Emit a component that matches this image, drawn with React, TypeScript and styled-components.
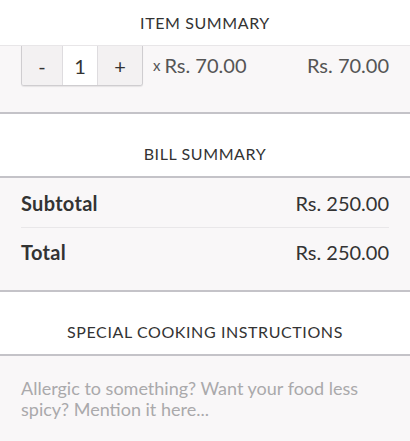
import React, { useState } from "react";
import styled, { createGlobalStyle } from "styled-components";

const GlobalStyle = createGlobalStyle`
  body {
    margin: 0;
    background: #fff;
    font-family: Lato, "Open Sans", sans-serif;
    color: #333;
  }
  * {
    box-sizing: border-box;
  }
`;

const Page = styled.div`
  width: 410px;
  height: 441px;
  overflow: hidden;
  display: flex;
  flex-direction: column;
`;

const SectionHeader = styled.div<{ $compact?: boolean }>`
  background: #fff;
  text-align: center;
  font-size: 16px;
  line-height: 20px;
  letter-spacing: 0.6px;
  color: #333;
  padding: ${(p) => (p.$compact ? "13px 0 12px" : "30px 0 12px")};
  border-bottom: ${(p) => (p.$compact ? "1px solid #e8e6e8" : "2px solid #c4c3c8")};
`;

const Section = styled.div<{ $borderBottom?: boolean }>`
  background: #f9f7f8;
  border-bottom: ${(p) => (p.$borderBottom ? "2px solid #c4c3c8" : "none")};
`;

const ItemRow = styled.div`
  display: flex;
  align-items: flex-start;
  padding: 0 21px 26px;
`;

const Stepper = styled.div`
  display: flex;
  height: 40px;
  border: 1px solid #cfcdd0;
  border-top: none;
  border-radius: 0 0 3px 3px;
  box-shadow: 0 1px 1px rgba(0, 0, 0, 0.08);
  overflow: hidden;
`;

const StepButton = styled.div<{ $w: number; $white?: boolean }>`
  width: ${(p) => p.$w}px;
  display: flex;
  align-items: center;
  justify-content: center;
  background: ${(p) => (p.$white ? "#fff" : "#f3f1f2")};
  font-size: 20px;
  color: #333;
  cursor: pointer;
  & + & {
    border-left: 1px solid #dedcdf;
  }
`;

const UnitPrice = styled.div`
  margin-left: 10px;
  height: 38px;
  display: flex;
  align-items: center;
  font-size: 20px;
  color: #555;
  gap: 4px;
  span {
    font-size: 15px;
  }
`;

const LinePrice = styled.div`
  margin-left: auto;
  height: 38px;
  display: flex;
  align-items: center;
  font-size: 20px;
  color: #555;
`;

const BillList = styled.div`
  padding: 0 21px 14px;
`;

const BillRow = styled.div`
  display: flex;
  justify-content: space-between;
  align-items: center;
  height: 49px;
  font-size: 20px;
  color: #333;
  & + & {
    border-top: 1px solid #e9e7e9;
  }
`;

const BillLabel = styled.div`
  font-weight: 700;
  letter-spacing: 0.3px;
`;

const Instructions = styled.textarea`
  display: block;
  width: 100%;
  height: 100px;
  border: none;
  outline: none;
  resize: none;
  background: transparent;
  padding: 22px 21px 0;
  font-family: Lato, "Open Sans", sans-serif;
  font-size: 18px;
  line-height: 21px;
  color: #333;
  &::placeholder {
    color: #aaa9ab;
  }
`;

export default function App() {
  const [qty, setQty] = useState(1);
  const unit = 70;
  return (
    <>
      <GlobalStyle />
      <Page>
        <SectionHeader $compact>ITEM SUMMARY</SectionHeader>
        <Section $borderBottom>
          <ItemRow>
            <Stepper>
              <StepButton $w={40} onClick={() => setQty(Math.max(1, qty - 1))}>
                -
              </StepButton>
              <StepButton $w={35} $white>
                {qty}
              </StepButton>
              <StepButton $w={45} onClick={() => setQty(qty + 1)}>
                +
              </StepButton>
            </Stepper>
            <UnitPrice>
              <span>x</span>Rs. {unit.toFixed(2)}
            </UnitPrice>
            <LinePrice>Rs. {(unit * qty).toFixed(2)}</LinePrice>
          </ItemRow>
        </Section>
        <SectionHeader>BILL SUMMARY</SectionHeader>
        <Section $borderBottom>
          <BillList>
            <BillRow>
              <BillLabel>Subtotal</BillLabel>
              <div>Rs. 250.00</div>
            </BillRow>
            <BillRow>
              <BillLabel>Total</BillLabel>
              <div>Rs. 250.00</div>
            </BillRow>
          </BillList>
        </Section>
        <SectionHeader>SPECIAL COOKING INSTRUCTIONS</SectionHeader>
        <Section>
          <Instructions placeholder="Allergic to something? Want your food less spicy? Mention it here..." />
        </Section>
      </Page>
    </>
  );
}
